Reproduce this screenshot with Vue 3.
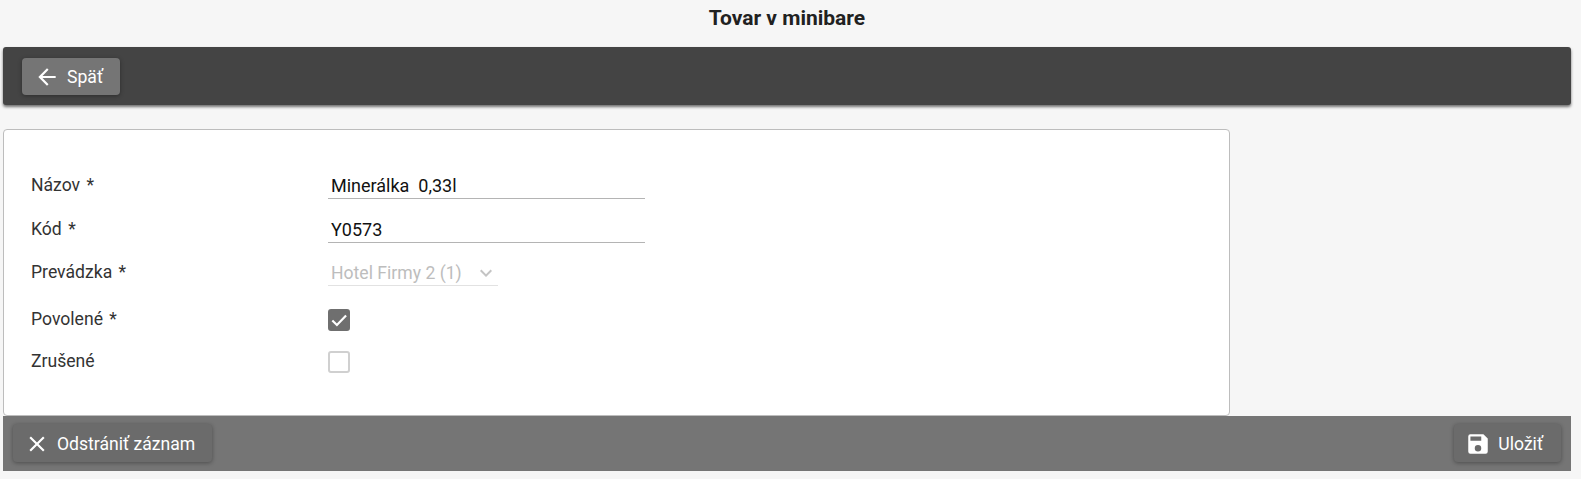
<template>
  <div class="page">
    <h1 class="title">Tovar v minibare</h1>

    <div class="toolbar">
      <button class="btn btn--back" type="button">
        <svg class="ico" viewBox="0 0 24 24" aria-hidden="true">
          <path d="M20 11H7.83l5.59-5.59L12 4l-8 8 8 8 1.41-1.41L7.83 13H20v-2z" />
        </svg>
        <span>Späť</span>
      </button>
    </div>

    <div class="card">
      <div class="form">
        <label class="lbl lbl--low">Názov <span class="req">*</span></label>
        <div class="field"><span class="input">Minerálka&nbsp; 0,33l</span></div>

        <label class="lbl lbl--low">Kód <span class="req">*</span></label>
        <div class="field"><span class="input">Y0573</span></div>

        <label class="lbl">Prevádzka <span class="req">*</span></label>
        <div class="field">
          <span class="select">
            <span>Hotel Firmy 2 (1)</span>
            <svg class="chev" viewBox="0 0 24 24" aria-hidden="true">
              <path d="M7.41 8.59 12 13.17l4.59-4.58L18 10l-6 6-6-6z" />
            </svg>
          </span>
        </div>

        <label class="lbl">Povolené <span class="req">*</span></label>
        <div class="field">
          <span class="check check--on">
            <svg viewBox="0 0 24 24" aria-hidden="true">
              <path d="M4 12.5l5.5 5.5L20.5 6.5" />
            </svg>
          </span>
        </div>

        <label class="lbl">Zrušené</label>
        <div class="field"><span class="check"></span></div>
      </div>
    </div>

    <div class="footer">
      <button class="btn btn--foot" type="button">
        <svg class="ico" viewBox="0 0 24 24" aria-hidden="true">
          <path d="M19 6.41 17.59 5 12 10.59 6.41 5 5 6.41 10.59 12 5 17.59 6.41 19 12 13.41 17.59 19 19 17.59 13.41 12z" />
        </svg>
        <span>Odstrániť záznam</span>
      </button>
      <button class="btn btn--foot btn--save" type="button">
        <svg class="ico" viewBox="0 0 24 24" aria-hidden="true">
          <path d="M17 3H5a2 2 0 0 0-2 2v14a2 2 0 0 0 2 2h14a2 2 0 0 0 2-2V7l-4-4zm-5 16a3 3 0 1 1 0-6 3 3 0 0 1 0 6zm3-10H5V5h10v4z" />
        </svg>
        <span>Uložiť</span>
      </button>
    </div>
  </div>
</template>

<script setup>
</script>

<style>
html, body { background: #f6f6f6; }
</style>

<style scoped>
.page {
  height: 479px;
  padding: 0 10px 0 3px;
  box-sizing: border-box;
  font-family: Roboto, "Liberation Sans", sans-serif;
  font-size: 17.6px;
  color: #212121;
  background: #f6f6f6;
  overflow: hidden;
}
.title {
  margin: 0;
  height: 47px;
  padding-top: 6px;
  box-sizing: border-box;
  text-align: center;
  font-size: 21px;
  line-height: 24px;
  font-weight: 700;
  color: #212121;
}
.toolbar {
  height: 58px;
  box-sizing: border-box;
  padding: 11px 19px;
  background: #444;
  border-radius: 3px;
  box-shadow: 0 2px 3px rgba(0, 0, 0, 0.55);
}
.btn {
  display: inline-flex;
  align-items: center;
  border: 0;
  border-radius: 4px;
  color: #fff;
  font: inherit;
  box-shadow: 0 1px 4px rgba(0, 0, 0, 0.35);
}
.ico { width: 26px; height: 26px; fill: #fff; flex: none; }
.btn--back {
  height: 37px;
  padding: 0 17px 0 12px;
  gap: 7px;
  background: #757575;
}
.card {
  margin-top: 24px;
  width: 1227px;
  height: 287px;
  box-sizing: border-box;
  background: #fff;
  border: 1px solid #bdbdbd;
  border-radius: 4px;
  padding: 32px 27px 0;
}
.form {
  display: grid;
  grid-template-columns: 297px 317px;
  grid-template-rows: 44px 44px 47px 42px 44px;
}
.lbl { display: block; line-height: 22px; padding-top: 11px; color: #333; }
.lbl--low { padding-top: 12px; }
.req { margin-left: 2px; }
.field { min-width: 0; }
.input {
  display: block;
  height: 26px;
  margin-top: 11px;
  padding: 1px 0 0 3px;
  box-sizing: border-box;
  font-size: 18px;
  line-height: 24px;
  color: #111;
  border-bottom: 1px solid #b4b4b4;
}
.select {
  display: inline-flex;
  align-items: center;
  width: 170px;
  height: 26px;
  margin-top: 10px;
  padding-left: 3px;
  box-sizing: border-box;
  color: #bdbdbd;
  border-bottom: 1px solid #e2e2e2;
}
.chev { width: 24px; height: 24px; fill: #c4c4c4; margin-left: 12px; }
.check {
  display: flex;
  width: 22px;
  height: 22px;
  box-sizing: border-box;
  margin-top: 12px;
  border: 2px solid #d0d0d0;
  border-radius: 3px;
  background: #fff;
}
.check--on { background: #6f6f6f; border-color: #6f6f6f; align-items: center; justify-content: center; }
.check svg { width: 20px; height: 20px; fill: none; stroke: #fff; stroke-width: 2.6; flex: none; }
.footer {
  height: 55px;
  box-sizing: border-box;
  padding: 8px 10px 0;
  background: #757575;
  display: flex;
  justify-content: space-between;
  align-items: flex-start;
}
.btn--foot {
  height: 38px;
  padding: 1px 17px 0 11px;
  gap: 7px;
  background: #6b6b6b;
}
.btn--save { padding-left: 11px; padding-right: 18px; }
</style>
